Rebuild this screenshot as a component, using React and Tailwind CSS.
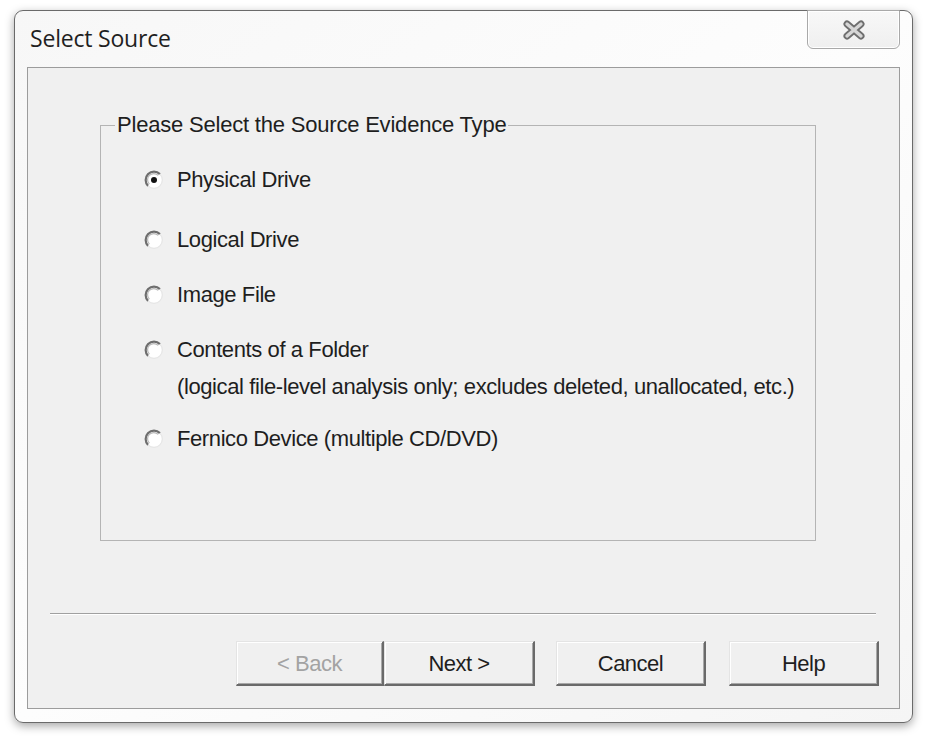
import React from "react";

function Radio({ checked }) {
  return (
    <svg width="20" height="20" viewBox="0 0 20 20" className="shrink-0">
      <circle cx="10" cy="10" r="8" fill="#ffffff" />
      <path d="M4.1 15.9 A8.3 8.3 0 0 1 15.9 4.1" fill="none" stroke="#6e6e6e" strokeWidth="2.2" />
      <path d="M4.1 15.9 A8.3 8.3 0 0 0 15.9 4.1" fill="none" stroke="#e6e6e6" strokeWidth="1.2" />
      <path d="M5.4 14.2 A6.2 6.2 0 0 1 14.2 5.4" fill="none" stroke="#b8b8b8" strokeWidth="1.2" />
      {checked && <circle cx="10" cy="10" r="3" fill="#111111" />}
    </svg>
  );
}

function Option({ checked, label, sub, className }) {
  return (
    <div className={"flex items-start " + (className || "")}>
      <div className="w-[33px] pt-[1px]">
        <Radio checked={checked} />
      </div>
      <div className="flex flex-col">
        <span className="leading-[22px]">{label}</span>
        {sub && <span className="leading-[22px] mt-[15px]">{sub}</span>}
      </div>
    </div>
  );
}

function Btn({ children, disabled, w }) {
  return (
    <div
      className={
        "h-[45px] flex items-center justify-center bg-[#f0f0f0] border-t border-l border-t-[#e4e4e4] border-l-[#e4e4e4] border-b-2 border-r-2 border-b-[#6a6a6a] border-r-[#6a6a6a] shadow-[inset_1px_1px_0_#ffffff,inset_-1px_-1px_0_#a8a8a8] text-[22px] tracking-[-0.5px] " +
        w +
        (disabled ? " text-[#a3a3a3]" : " text-[#1e1e1e]")
      }
    >
      {children}
    </div>
  );
}

export default function App() {
  return (
    <div className="w-[929px] h-[740px] bg-white pt-[10px] pl-[14px]" style={{ fontFamily: "'Liberation Sans', Arial, sans-serif" }}>
      <div className="w-[899px] h-[713px] rounded-[9px] border border-[#6a6a6a] bg-gradient-to-br from-[#f7f7f7] via-[#fdfdfd] to-[#f5f5f5] shadow-[0_3px_10px_rgba(0,0,0,0.35)] flex flex-col relative">
        <div className="h-[56px] flex items-start justify-between">
          <div
            className="pl-[15px] pt-[13px] text-[23px] leading-[28px] tracking-[-0.2px] text-[#1f1f1f]"
            style={{ fontFamily: "'Open Sans', 'Noto Sans', sans-serif" }}
          >
            Select Source
          </div>
          <div className="mr-[12px] -mt-px w-[93px] h-[39px] border border-[#a9a9a9] rounded-b-[6px] bg-gradient-to-b from-[#f8f8f8] to-[#efefef] shadow-[inset_0_0_0_1px_#ffffff] flex items-center justify-center">
            <svg width="26" height="20" viewBox="0 0 26 20">
              <path d="M6 4 L20 16 M20 4 L6 16" stroke="#6e6e6e" strokeWidth="7" strokeLinecap="round" />
              <path d="M6 4 L20 16 M20 4 L6 16" stroke="#d6d6d6" strokeWidth="3.4" strokeLinecap="round" />
            </svg>
          </div>
        </div>
        <div className="mx-[12px] mb-[13px] flex-1 border border-[#9c9c9c] bg-[#f0f0f0] flex flex-col text-[22px] text-[#1e1e1e] tracking-[-0.4px]">
          <div className="ml-[72px] mt-[57px] w-[716px] h-[416px] border border-[#b4b4b4] relative">
            <div className="absolute left-[14px] -top-[13px] bg-[#f0f0f0] px-[2px] leading-[24px] tracking-[-0.2px]">
              Please Select the Source Evidence Type
            </div>
            <div className="flex flex-col pl-[43px] pt-[43px]">
              <Option checked label="Physical Drive" />
              <Option label="Logical Drive" className="mt-[38px]" />
              <Option label="Image File" className="mt-[33px]" />
              <Option
                label="Contents of a Folder"
                sub="(logical file-level analysis only; excludes deleted, unallocated, etc.)"
                className="mt-[33px]"
              />
              <Option label="Fernico Device (multiple CD/DVD)" className="mt-[30px]" />
            </div>
          </div>
          <div className="ml-[22px] mr-[23px] mt-[72px] h-[2px] border-t border-t-[#a0a0a0] border-b border-b-[#ffffff]" />
          <div className="flex justify-end mt-[26px] mr-[20px]">
            <Btn disabled w="w-[148px]">&lt; Back</Btn>
            <Btn w="w-[151px]">Next &gt;</Btn>
            <Btn w="w-[150px] ml-[21px]">Cancel</Btn>
            <Btn w="w-[150px] ml-[23px]">Help</Btn>
          </div>
        </div>
      </div>
    </div>
  );
}
